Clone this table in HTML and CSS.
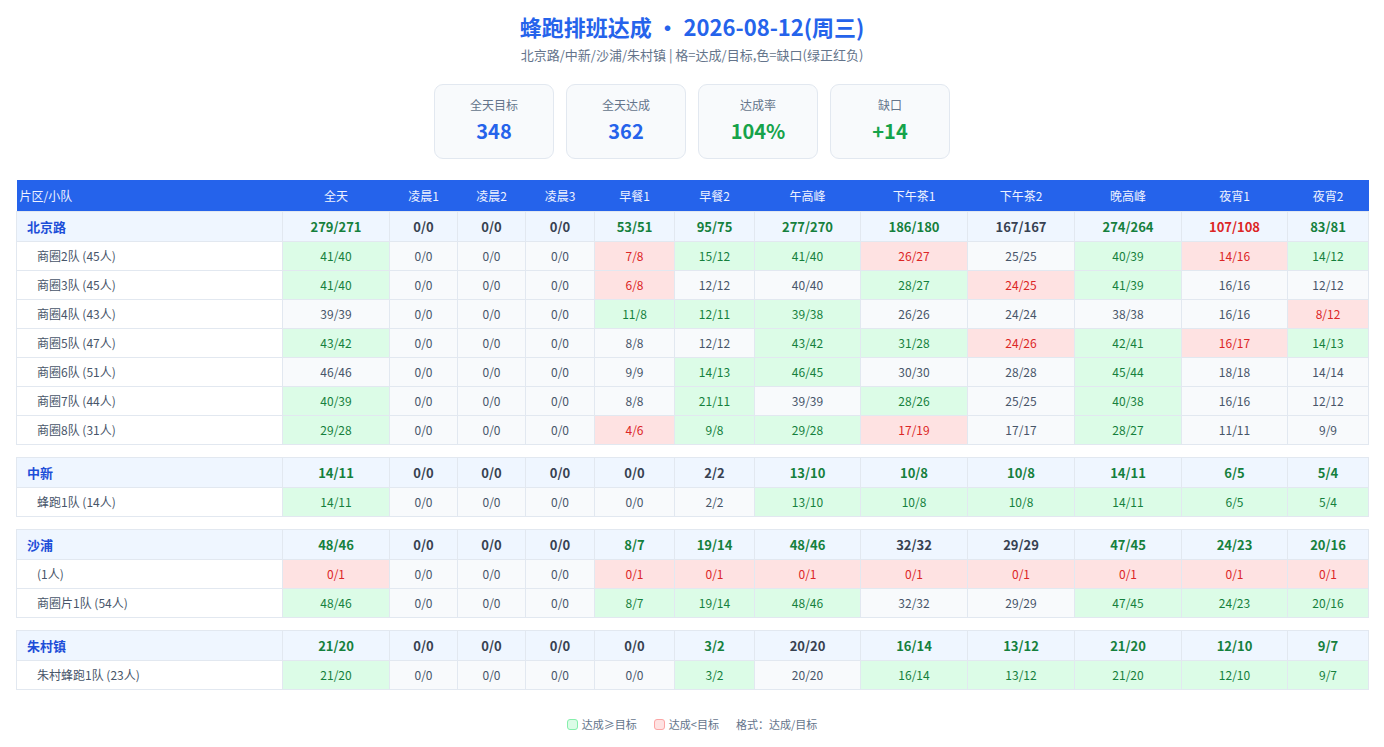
FILE: index.html
```html
<!DOCTYPE html>
<html lang="zh-CN">
<head>
<meta charset="utf-8">
<title>蜂跑排班达成</title>
<link rel="stylesheet" href="styles.css">
</head>
<body>
<div class="page">
  <h1 class="title">蜂跑排班达成 · 2026-08-12(周三)</h1>
  <div class="subtitle">北京路/中新/沙浦/朱村镇 | 格=达成/目标,色=缺口(绿正红负)</div>
  <div class="cards">
    <div class="card"><div class="card-label">全天目标</div><div class="card-value blue">348</div></div>
    <div class="card"><div class="card-label">全天达成</div><div class="card-value blue">362</div></div>
    <div class="card"><div class="card-label">达成率</div><div class="card-value green">104%</div></div>
    <div class="card"><div class="card-label">缺口</div><div class="card-value green">+14</div></div>
  </div>
  <table class="grid">
    <colgroup>
      <col class="c-label"><col class="c-w107"><col class="c-w68"><col class="c-w68"><col class="c-w69"><col class="c-w80"><col class="c-w80"><col class="c-w106"><col class="c-w107"><col class="c-w107"><col class="c-w107"><col class="c-w106"><col class="c-w81">
    </colgroup>
    <thead>
      <tr><th class="h-label">片区/小队</th><th>全天</th><th>凌晨1</th><th>凌晨2</th><th>凌晨3</th><th>早餐1</th><th>早餐2</th><th>午高峰</th><th>下午茶1</th><th>下午茶2</th><th>晚高峰</th><th>夜宵1</th><th>夜宵2</th></tr>
    </thead>
    <tbody>
      <tr class="group"><td class="lbl">北京路</td><td class="g">279/271</td><td>0/0</td><td>0/0</td><td>0/0</td><td class="g">53/51</td><td class="g">95/75</td><td class="g">277/270</td><td class="g">186/180</td><td>167/167</td><td class="g">274/264</td><td class="r">107/108</td><td class="g">83/81</td></tr>
      <tr class="row"><td class="lbl">商圈2队 (45人)</td><td class="g">41/40</td><td>0/0</td><td>0/0</td><td>0/0</td><td class="r">7/8</td><td class="g">15/12</td><td class="g">41/40</td><td class="r">26/27</td><td>25/25</td><td class="g">40/39</td><td class="r">14/16</td><td class="g">14/12</td></tr>
      <tr class="row"><td class="lbl">商圈3队 (45人)</td><td class="g">41/40</td><td>0/0</td><td>0/0</td><td>0/0</td><td class="r">6/8</td><td>12/12</td><td>40/40</td><td class="g">28/27</td><td class="r">24/25</td><td class="g">41/39</td><td>16/16</td><td>12/12</td></tr>
      <tr class="row"><td class="lbl">商圈4队 (43人)</td><td>39/39</td><td>0/0</td><td>0/0</td><td>0/0</td><td class="g">11/8</td><td class="g">12/11</td><td class="g">39/38</td><td>26/26</td><td>24/24</td><td>38/38</td><td>16/16</td><td class="r">8/12</td></tr>
      <tr class="row"><td class="lbl">商圈5队 (47人)</td><td class="g">43/42</td><td>0/0</td><td>0/0</td><td>0/0</td><td>8/8</td><td>12/12</td><td class="g">43/42</td><td class="g">31/28</td><td class="r">24/26</td><td class="g">42/41</td><td class="r">16/17</td><td class="g">14/13</td></tr>
      <tr class="row"><td class="lbl">商圈6队 (51人)</td><td>46/46</td><td>0/0</td><td>0/0</td><td>0/0</td><td>9/9</td><td class="g">14/13</td><td class="g">46/45</td><td>30/30</td><td>28/28</td><td class="g">45/44</td><td>18/18</td><td>14/14</td></tr>
      <tr class="row"><td class="lbl">商圈7队 (44人)</td><td class="g">40/39</td><td>0/0</td><td>0/0</td><td>0/0</td><td>8/8</td><td class="g">21/11</td><td>39/39</td><td class="g">28/26</td><td>25/25</td><td class="g">40/38</td><td>16/16</td><td>12/12</td></tr>
      <tr class="row"><td class="lbl">商圈8队 (31人)</td><td class="g">29/28</td><td>0/0</td><td>0/0</td><td>0/0</td><td class="r">4/6</td><td class="g">9/8</td><td class="g">29/28</td><td class="r">17/19</td><td>17/17</td><td class="g">28/27</td><td>11/11</td><td>9/9</td></tr>
      <tr class="spacer"><td colspan="13"></td></tr>
      <tr class="group"><td class="lbl">中新</td><td class="g">14/11</td><td>0/0</td><td>0/0</td><td>0/0</td><td>0/0</td><td>2/2</td><td class="g">13/10</td><td class="g">10/8</td><td class="g">10/8</td><td class="g">14/11</td><td class="g">6/5</td><td class="g">5/4</td></tr>
      <tr class="row"><td class="lbl">蜂跑1队 (14人)</td><td class="g">14/11</td><td>0/0</td><td>0/0</td><td>0/0</td><td>0/0</td><td>2/2</td><td class="g">13/10</td><td class="g">10/8</td><td class="g">10/8</td><td class="g">14/11</td><td class="g">6/5</td><td class="g">5/4</td></tr>
      <tr class="spacer"><td colspan="13"></td></tr>
      <tr class="group"><td class="lbl">沙浦</td><td class="g">48/46</td><td>0/0</td><td>0/0</td><td>0/0</td><td class="g">8/7</td><td class="g">19/14</td><td class="g">48/46</td><td>32/32</td><td>29/29</td><td class="g">47/45</td><td class="g">24/23</td><td class="g">20/16</td></tr>
      <tr class="row"><td class="lbl">(1人)</td><td class="r">0/1</td><td>0/0</td><td>0/0</td><td>0/0</td><td class="r">0/1</td><td class="r">0/1</td><td class="r">0/1</td><td class="r">0/1</td><td class="r">0/1</td><td class="r">0/1</td><td class="r">0/1</td><td class="r">0/1</td></tr>
      <tr class="row"><td class="lbl">商圈片1队 (54人)</td><td class="g">48/46</td><td>0/0</td><td>0/0</td><td>0/0</td><td class="g">8/7</td><td class="g">19/14</td><td class="g">48/46</td><td>32/32</td><td>29/29</td><td class="g">47/45</td><td class="g">24/23</td><td class="g">20/16</td></tr>
      <tr class="spacer"><td colspan="13"></td></tr>
      <tr class="group"><td class="lbl">朱村镇</td><td class="g">21/20</td><td>0/0</td><td>0/0</td><td>0/0</td><td>0/0</td><td class="g">3/2</td><td>20/20</td><td class="g">16/14</td><td class="g">13/12</td><td class="g">21/20</td><td class="g">12/10</td><td class="g">9/7</td></tr>
      <tr class="row"><td class="lbl">朱村蜂跑1队 (23人)</td><td class="g">21/20</td><td>0/0</td><td>0/0</td><td>0/0</td><td>0/0</td><td class="g">3/2</td><td>20/20</td><td class="g">16/14</td><td class="g">13/12</td><td class="g">21/20</td><td class="g">12/10</td><td class="g">9/7</td></tr>
    </tbody>
  </table>
  <div class="legend">
    <span class="leg-item"><span class="sw sw-g"></span>达成≥目标</span>
    <span class="leg-item"><span class="sw sw-r"></span>达成&lt;目标</span>
    <span class="leg-item">格式：达成/目标</span>
  </div>
</div>
</body>
</html>
```

FILE: styles.css
```css
* { box-sizing: border-box; }
html, body { margin: 0; padding: 0; background: #ffffff; }
body {
  font-family: "Noto Sans CJK SC", "Noto Sans", "Liberation Sans", sans-serif;
  color: #334155;
}
.page { padding: 11px 16px 16px; }
.title {
  margin: 0;
  text-align: center;
  font-size: 22px;
  line-height: 30px;
  font-weight: 700;
  color: #2563eb;
}
.subtitle {
  text-align: center;
  font-size: 13px;
  line-height: 20px;
  color: #64748b;
  margin-top: 4px;
}
.cards {
  display: flex;
  justify-content: center;
  gap: 12px;
  margin-top: 19px;
}
.card {
  width: 120px;
  height: 75px;
  background: #f8fafc;
  border: 1px solid #e2e8f0;
  border-radius: 9px;
  text-align: center;
  padding-top: 11px;
}
.card-label { font-size: 12px; line-height: 18px; color: #64748b; }
.card-value { font-size: 20px; line-height: 26px; font-weight: 700; margin-top: 4px; }
.blue { color: #2563eb; }
.green { color: #16a34a; }

.grid {
  width: 1352px;
  table-layout: fixed;
  border-collapse: collapse;
  margin-top: 21px;
  font-size: 12px;
}
.c-label { width: 266px; }
.c-w107 { width: 107px; }
.c-w106 { width: 106px; }
.c-w68 { width: 68px; }
.c-w69 { width: 69px; }
.c-w80 { width: 80px; }
.c-w81 { width: 81px; }

.grid th {
  background: #2563eb;
  color: #eef2ff;
  font-weight: 400;
  font-size: 12px;
  line-height: 19px;
  padding: 6px 4px;
  text-align: center;
}
.grid th.h-label { text-align: left; padding-left: 3px; }

.grid td {
  border: 1px solid #e2e8f0;
  text-align: center;
  padding: 5px 4px;
  line-height: 18px;
  background: #f8fafc;
  color: #475569;
  white-space: nowrap;
}
.grid .row td.lbl {
  text-align: left;
  background: #ffffff;
  padding-left: 20px;
  color: #475569;
}
.grid .row td.g { background: #dcfce7; color: #15803d; }
.grid .row td.r { background: #fee2e2; color: #dc2626; }

.grid .group td {
  background: #eff6ff;
  font-size: 13px;
  font-weight: 700;
  line-height: 19px;
  color: #374151;
}
.grid .group td.lbl { text-align: left; padding-left: 10px; color: #1d4ed8; }
.grid .group td.g { color: #15803d; }
.grid .group td.r { color: #dc2626; }

.grid .spacer td {
  border: none;
  background: #ffffff;
  height: 13px;
  padding: 0;
  line-height: 0;
}

.legend {
  margin-top: 25px;
  display: flex;
  justify-content: center;
  gap: 17px;
  font-size: 11px;
  line-height: 18px;
  color: #64748b;
}
.leg-item { display: inline-flex; align-items: center; }
.sw {
  display: inline-block;
  width: 11px;
  height: 11px;
  border-radius: 3px;
  margin-right: 4px;
}
.sw-g { background: #dcfce7; border: 1px solid #86efac; }
.sw-r { background: #fee2e2; border: 1px solid #fca5a5; }
```
